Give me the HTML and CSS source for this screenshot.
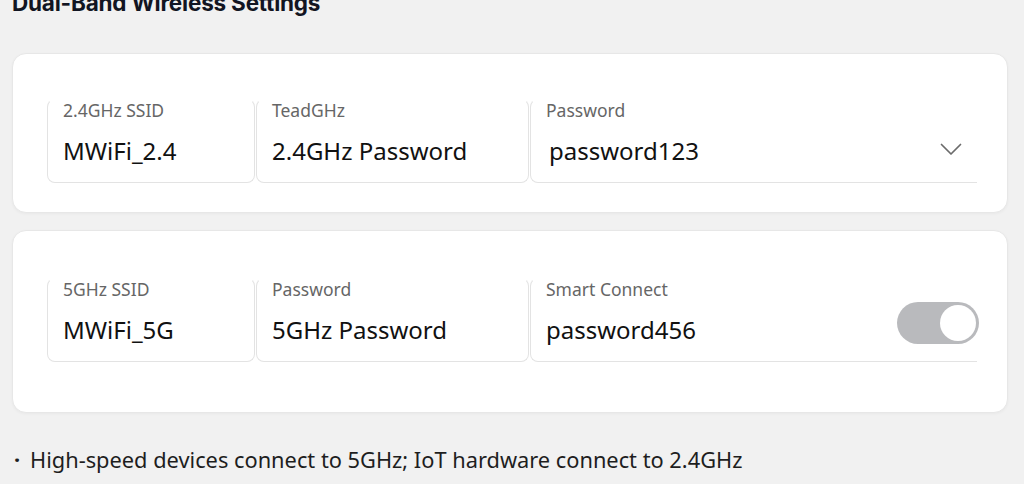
FILE: index.html
```html
<!DOCTYPE html>
<html>
<head>
<meta charset="utf-8">
<link rel="stylesheet" href="styles.css">
</head>
<body>
<div class="page">
  <h1 class="title">Dual-Band Wireless Settings</h1>
  <section class="card card-a">
    <div class="row">
      <div class="field f1">
        <div class="label">2.4GHz SSID</div>
        <div class="value">MWiFi_2.4</div>
      </div>
      <div class="field f2">
        <div class="label">TeadGHz</div>
        <div class="value">2.4GHz Password</div>
      </div>
      <div class="field f3">
        <div class="stack">
          <div class="label">Password</div>
          <div class="value v3">password123</div>
        </div>
        <svg class="chev" width="22" height="13" viewBox="0 0 22 13"><path d="M1.5 1.5 L11 11 L20.5 1.5" fill="none" stroke="#6b6b6b" stroke-width="1.7" stroke-linecap="round" stroke-linejoin="round"/></svg>
      </div>
    </div>
  </section>
  <section class="card card-b">
    <div class="row">
      <div class="field f1">
        <div class="label">5GHz SSID</div>
        <div class="value">MWiFi_5G</div>
      </div>
      <div class="field f2">
        <div class="label">Password</div>
        <div class="value">5GHz Password</div>
      </div>
      <div class="field f3">
        <div class="stack">
          <div class="label">Smart Connect</div>
          <div class="value">password456</div>
        </div>
        <div class="toggle"><div class="knob"></div></div>
      </div>
    </div>
  </section>
  <p class="note"><span class="dot">·</span>High-speed devices connect to 5GHz; IoT hardware connect to 2.4GHz</p>
</div>
</body>
</html>
```
FILE: styles.css
```css
html, body {
  margin: 0;
  padding: 0;
  background: #f1f1f1;
}
body {
  font-family: "Noto Sans", "Liberation Sans", sans-serif;
  color: #151515;
}
.page {
  padding: 0 16px 0 12px;
  display: flex;
  flex-direction: column;
}
.title {
  margin: -10px 0 0 0;
  font-family: Inter, "Noto Sans", sans-serif;
  font-size: 22.5px;
  line-height: 26px;
  font-weight: 700;
  color: #121522;
  letter-spacing: -0.2px;
}
.card {
  background: #fff;
  border: 1px solid #e7e7e7;
  border-radius: 14px;
  box-shadow: 0 1px 3px rgba(0,0,0,0.04);
  padding: 0 30px 0 34px;
}
.card-a {
  margin-top: 37px;
  padding-top: 45px;
  padding-bottom: 29px;
}
.card-b {
  margin-top: 17px;
  padding-top: 47px;
  padding-bottom: 50px;
}
.row {
  display: flex;
  gap: 1px;
}
.field {
  border: 1px solid #e3e3e3;
  border-top-color: transparent;
  border-radius: 8px;
  padding: 0 15px 16px;
  box-sizing: border-box;
}
.f1 { width: 208px; }
.f2 { width: 273px; }
.f3 {
  flex: 1;
  border-right: none;
  border-bottom-right-radius: 0;
  display: flex;
  align-items: flex-end;
  justify-content: space-between;
  padding-right: 0;
}
.label {
  font-size: 17.5px;
  line-height: 20px;
  color: #666;
}
.value {
  font-size: 24px;
  line-height: 30px;
  margin-top: 16px;
  color: #111;
}
.v3 { padding-left: 3px; }
.chev {
  margin-right: 15px;
  margin-bottom: 10px;
}
.toggle {
  width: 82px;
  height: 42px;
  border-radius: 21px;
  background: #b9babd;
  box-sizing: border-box;
  padding: 3px;
  display: flex;
  justify-content: flex-end;
  margin-right: -2px;
  margin-bottom: 1px;
}
.knob {
  width: 36px;
  height: 36px;
  border-radius: 50%;
  background: #fff;
}
.note {
  margin: 34px 0 0 2px;
  font-size: 21.8px;
  line-height: 26px;
  color: #1e1e1e;
}
.dot {
  display: inline-block;
  width: 16px;
  font-weight: 700;
}
```
